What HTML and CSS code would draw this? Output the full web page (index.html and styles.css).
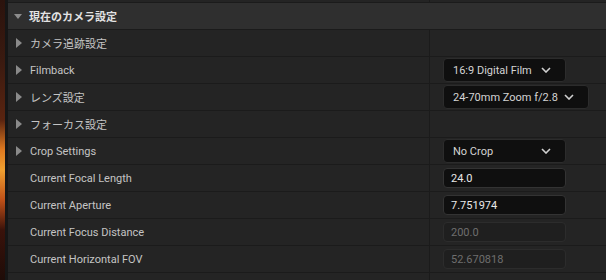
FILE: index.html
```html
<!DOCTYPE html>
<html>
<head>
<meta charset="utf-8">
<link rel="stylesheet" href="styles.css">
</head>
<body>
<div class="app">
  <div class="backdrop"><div class="edge"></div></div>
  <div class="panel">
    <div class="row partial"><div class="name"></div><div class="value"></div></div>
    <div class="header">
      <span class="tri-down"></span>
      <span class="htext">現在のカメラ設定</span>
    </div>
    <div class="row"><div class="name"><span class="tri-right"></span><span class="label">カメラ追跡設定</span></div><div class="value"></div></div>
    <div class="row"><div class="name"><span class="tri-right"></span><span class="label">Filmback</span></div><div class="value"><div class="combo"><span class="ctext">16:9 Digital Film</span><svg class="chev" width="10" height="6" viewBox="0 0 10 6"><path d="M1 1 L5 5 L9 1" fill="none" stroke="#d0d0d0" stroke-width="1.6"/></svg></div></div></div>
    <div class="row"><div class="name"><span class="tri-right"></span><span class="label">レンズ設定</span></div><div class="value"><div class="combo"><span class="ctext">24-70mm Zoom f/2.8</span><svg class="chev" width="10" height="6" viewBox="0 0 10 6"><path d="M1 1 L5 5 L9 1" fill="none" stroke="#d0d0d0" stroke-width="1.6"/></svg></div></div></div>
    <div class="row"><div class="name"><span class="tri-right"></span><span class="label">フォーカス設定</span></div><div class="value"></div></div>
    <div class="row"><div class="name"><span class="tri-right"></span><span class="label">Crop Settings</span></div><div class="value"><div class="combo"><span class="ctext">No Crop</span><svg class="chev" width="10" height="6" viewBox="0 0 10 6"><path d="M1 1 L5 5 L9 1" fill="none" stroke="#d0d0d0" stroke-width="1.6"/></svg></div></div></div>
    <div class="row"><div class="name"><span class="label">Current Focal Length</span></div><div class="value"><div class="field">24.0</div></div></div>
    <div class="row"><div class="name"><span class="label">Current Aperture</span></div><div class="value"><div class="field">7.751974</div></div></div>
    <div class="row"><div class="name"><span class="label">Current Focus Distance</span></div><div class="value"><div class="field disabled">200.0</div></div></div>
    <div class="row"><div class="name"><span class="label">Current Horizontal FOV</span></div><div class="value"><div class="field disabled">52.670818</div></div></div>
    <div class="row"><div class="name"><span class="label">Field Of View</span></div><div class="value"></div></div>
  </div>
</div>
</body>
</html>
```
FILE: styles.css
```css
html, body {
  margin: 0;
  padding: 0;
  width: 606px;
  height: 280px;
  overflow: hidden;
  background: #1a1a1a;
  font-family: Roboto, "Noto Sans CJK JP", sans-serif;
}
.app {
  display: flex;
  height: 280px;
}
.backdrop {
  width: 5px;
  flex: none;
  background: linear-gradient(180deg, #2b130d 0px, #3a1a10 60px, #5a2410 120px, #e07a20 150px, #f0a030 170px, #c05018 200px, #3a120a 230px, #1e0c08 280px);
}
.edge {
  display: none;
}
.panel {
  flex: 1;
  display: flex;
  flex-direction: column;
  border-left: 3px solid #161616;
  background: #1b1b1b;
  gap: 1px;
  margin-top: -24px;
}
.row {
  height: 26px;
  flex: none;
  display: flex;
  background: #242424;
}
.row .name {
  width: 421px;
  flex: none;
  display: flex;
  align-items: center;
  border-right: 1px solid #1b1b1b;
}
.row .value {
  flex: 1;
  display: flex;
  align-items: center;
  padding-left: 13px;
}
.header {
  height: 26px;
  flex: none;
  display: flex;
  align-items: center;
  background: #2f2f2f;
}
.tri-down {
  width: 0;
  height: 0;
  margin-left: 6px;
  border-left: 4.5px solid transparent;
  border-right: 4.5px solid transparent;
  border-top: 5px solid #8c8c8c;
}
.htext {
  margin-left: 7px;
  font-size: 11px;
  font-weight: bold;
  color: #e2e2e2;
}
.tri-right {
  width: 0;
  height: 0;
  margin-left: 8px;
  border-top: 5px solid transparent;
  border-bottom: 5px solid transparent;
  border-left: 6px solid #8a8a8a;
}
.label {
  position: relative;
  font-size: 11px;
  color: #c4c4c4;
}
.tri-right + .label {
  margin-left: 8px;
}
.name > .label:first-child {
  margin-left: 22px;
}
.combo {
  height: 24px;
  box-sizing: border-box;
  min-width: 123px;
  display: flex;
  align-items: center;
  gap: 6px;
  padding: 0 14px 0 9px;
  background: #0f0f0f;
  border: 1px solid #2c2c2c;
  border-radius: 4px;
  font-size: 11px;
  color: #d4d4d4;
}
.ctext {
  flex: 1;
  white-space: nowrap;
}
.chev {
  flex: none;
}
.field {
  width: 123px;
  height: 20px;
  box-sizing: border-box;
  padding: 0 7px;
  display: flex;
  align-items: center;
  background: #0f0f0f;
  border: 1px solid #333333;
  border-radius: 4px;
  font-size: 11px;
  color: #e8e8e8;
}
.field.disabled {
  background: #1f1f1f;
  border-color: #2c2c2c;
  color: #6e6e6e;
}
```
